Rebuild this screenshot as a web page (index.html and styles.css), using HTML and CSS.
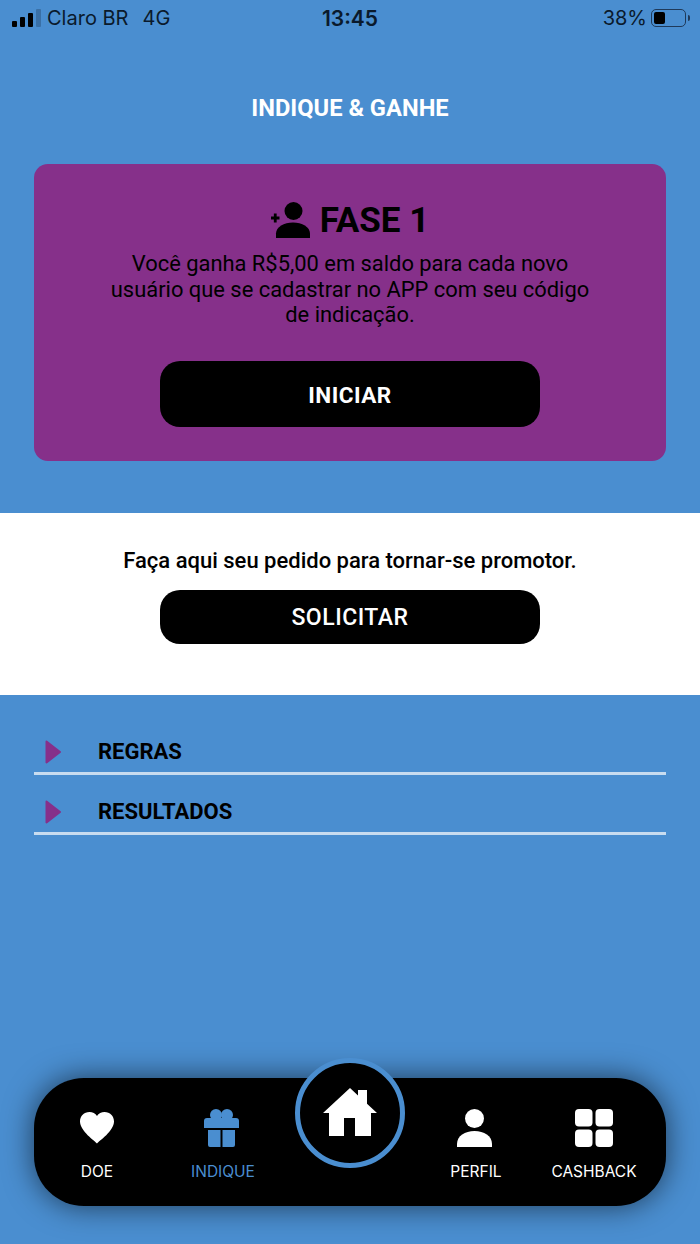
FILE: index.html
```html
<!DOCTYPE html>
<html lang="pt-BR">
    <head>
        <meta charset="UTF-8">
        <meta name="viewport" content="width=device-width, initial-scale=1.0">
        <title>Indique e Ganhe</title>
        <link rel="stylesheet" href="styles.css">
    </head>
    <body>
        <div id="app">
            <div class="statusbar">
                <div class="status-left">
                    <span class="signal"><i></i><i></i><i></i><i class="off"></i></span>
                    <span>Claro BR</span>
                    <span class="rede">4G</span>
                </div>
                <div class="status-time">13:45</div>
                <div class="status-right">
                    <span>38%</span>
                    <span class="battery"><i></i></span>
                    <span class="battery-tip"></span>
                </div>
            </div>

            <h1 class="titulo">INDIQUE &amp; GANHE</h1>

            <section class="card">
                <h2 class="fase">
                    <svg class="fase-icon" viewBox="0 0 39 36" width="39" height="36">
                        <circle cx="22.500" cy="9" r="9" fill="#000"/>
                        <path d="M5 36v-4.500C5 25 13 20.500 22 20.500S39 25 39 31.500V36z" fill="#000"/>
                        <path d="M0 16h8.500M4.250 11.500v9" stroke="#000" stroke-width="2.800" fill="none"/>
                    </svg>
                    FASE 1
                </h2>
                <p class="card-texto">Você ganha R$5,00 em saldo para cada novo usuário que se cadastrar no APP com seu código de indicação.</p>
                <button class="botao botao-iniciar">INICIAR</button>
            </section>

            <section class="promotor">
                <p>Faça aqui seu pedido para tornar-se promotor.</p>
                <button class="botao botao-solicitar">SOLICITAR</button>
            </section>

            <section class="lista">
                <div class="lista-item">
                    <svg viewBox="0 0 16 24" width="16" height="24"><path d="M1.500 1.500L15 12 1.500 22.500z" fill="#86308a" stroke="#86308a" stroke-width="2" stroke-linejoin="round"/></svg>
                    <span>REGRAS</span>
                </div>
                <div class="lista-item">
                    <svg viewBox="0 0 16 24" width="16" height="24"><path d="M1.500 1.500L15 12 1.500 22.500z" fill="#86308a" stroke="#86308a" stroke-width="2" stroke-linejoin="round"/></svg>
                    <span>RESULTADOS</span>
                </div>
            </section>

            <nav class="menu">
                <a class="menu-item item-doe">
                    <svg viewBox="0 -3 34 38" width="34" height="38"><path d="M17 31.500C15 29 0 19 0 9.500 0 4 4 0 9.500 0 12.500 0 15.500 1.500 17 4 18.500 1.500 21.500 0 24.500 0 30 0 34 4 34 9.500 34 19 19 29 17 31.500z" fill="#fff"/></svg>
                    <span>DOE</span>
                </a>
                <a class="menu-item item-indique ativo">
                    <svg viewBox="0 0 35 38" width="35" height="38" fill="#4a8ed0">
                        <circle cx="12" cy="6" r="6"/>
                        <circle cx="23" cy="6" r="6"/>
                        <path d="M3 9h29a3 3 0 0 1 3 3v7H0v-7a3 3 0 0 1 3-3z"/>
                        <path d="M4 21h12.500v17H6a2 2 0 0 1-2-2zM18.500 21H31v15a2 2 0 0 1-2 2H18.500z"/>
                    </svg>
                    <span>INDIQUE</span>
                </a>
                <div class="menu-espaco"></div>
                <a class="menu-item item-perfil">
                    <svg viewBox="0 0 35 38" width="35" height="38" fill="#fff">
                        <circle cx="17.500" cy="9.500" r="9.500"/>
                        <path d="M0 38v-3c0-8 8-13 17.500-13S35 27 35 35v3z"/>
                    </svg>
                    <span>PERFIL</span>
                </a>
                <a class="menu-item item-cashback">
                    <svg viewBox="0 0 38 38" width="38" height="38" fill="#fff">
                        <rect width="17.500" height="17.500" rx="4"/>
                        <rect x="20.500" width="17.500" height="17.500" rx="4"/>
                        <rect y="20.500" width="17.500" height="17.500" rx="4"/>
                        <rect x="20.500" y="20.500" width="17.500" height="17.500" rx="4"/>
                    </svg>
                    <span>CASHBACK</span>
                </a>
                <div class="home">
                    <svg viewBox="0 0 54 48" width="54" height="48"><path d="M27 0L35 7.400V2h9v13.700L54 25h-6v23H32V30H21v18H6V25H0z" fill="#fff"/></svg>
                </div>
            </nav>
        </div>
    </body>
</html>
```

FILE: styles.css
```css
html, body {
    margin: 0;
    padding: 0;
}

body {
    font-family: 'Roboto', sans-serif;
    background-color: #4a8ed0;
    color: #000;
}

#app {
    position: relative;
    width: 700px;
    height: 1244px;
    overflow: hidden;
}

.statusbar {
    height: 36px;
    display: flex;
    align-items: center;
    justify-content: space-between;
    position: relative;
    padding: 0 10px 0 12px;
    font-family: 'Inter', sans-serif;
    font-size: 20px;
    color: #0a1a2c;
}

.status-left,
.status-right {
    display: flex;
    align-items: center;
}

.signal {
    display: flex;
    align-items: flex-end;
    gap: 3px;
    height: 18px;
    margin-right: 6px;
}

.signal i {
    width: 5px;
    background-color: #000;
    border-radius: 1px;
}

.signal i:nth-child(1) { height: 6px; }
.signal i:nth-child(2) { height: 10px; }
.signal i:nth-child(3) { height: 14px; }
.signal i:nth-child(4) { height: 18px; }

.signal i.off {
    background-color: #3a70a6;
}

.rede {
    margin-left: 14px;
}

.status-time {
    position: absolute;
    left: 0;
    right: 0;
    text-align: center;
    font-size: 21px;
    font-weight: 600;
    pointer-events: none;
}

.battery {
    width: 35px;
    height: 18px;
    box-sizing: border-box;
    border: 1.500px solid #1f3a5a;
    border-radius: 5px;
    padding: 2px;
    margin-left: 4px;
    display: flex;
}

.battery i {
    width: 11px;
    background-color: #000;
    border-radius: 2px;
}

.battery-tip {
    width: 2px;
    height: 6px;
    margin-left: 2px;
    background-color: #1f3a5a;
    border-radius: 0 2px 2px 0;
}

.titulo {
    margin: 59px 0 0;
    height: 27px;
    line-height: 27px;
    text-align: center;
    font-size: 23.700px;
    font-weight: 700;
    color: #fff;
}

.card {
    margin: 42px 34px 0;
    height: 297px;
    box-sizing: border-box;
    padding-top: 34px;
    background-color: #86308a;
    border-radius: 14px;
    display: flex;
    flex-direction: column;
    align-items: center;
}

.fase {
    margin: 0;
    display: flex;
    align-items: center;
    gap: 10px;
    height: 44px;
    font-size: 35px;
    font-weight: 700;
}

.card-texto {
    margin: 9px 0 0;
    width: 490px;
    text-align: center;
    font-size: 21.900px;
    line-height: 25.500px;
}

.botao {
    display: block;
    width: 380px;
    border: none;
    border-radius: 20px;
    background-color: #000;
    color: #fff;
    font-family: 'Roboto', sans-serif;
    font-weight: 500;
    letter-spacing: 0.5px;
}

.botao-iniciar {
    height: 66px;
    margin-top: 33px;
    padding-top: 3px;
    font-size: 22.500px;
    font-weight: 700;
}

.promotor {
    margin-top: 52px;
    height: 182px;
    box-sizing: border-box;
    padding-top: 35px;
    background-color: #fff;
    display: flex;
    flex-direction: column;
    align-items: center;
}

.promotor p {
    margin: 0;
    height: 26px;
    line-height: 26px;
    font-size: 22px;
    font-weight: 500;
}

.botao-solicitar {
    height: 54px;
    margin-top: 16px;
    font-size: 23px;
}

.lista {
    margin: 36px 34px 0;
    display: flex;
    flex-direction: column;
    gap: 16px;
}

.lista-item {
    height: 41px;
    display: flex;
    align-items: center;
    padding-left: 11px;
    border-bottom: 3px solid #c8dcf0;
    font-size: 22px;
    font-weight: 700;
}

.lista-item span {
    margin-left: 37px;
}

.menu {
    position: absolute;
    left: 34px;
    top: 1078px;
    width: 632px;
    height: 128px;
    box-sizing: border-box;
    background-color: #000;
    border-radius: 50px;
    box-shadow: 0 0 30px rgba(0, 0, 0, 0.6);
    display: flex;
}

.menu-item {
    display: flex;
    flex-direction: column;
    align-items: center;
    padding-top: 31px;
    font-family: 'Inter', sans-serif;
    font-size: 15.500px;
    color: #fff;
}

.menu-item svg {
    margin-bottom: 15px;
}

.item-indique svg,
.item-perfil svg {
    margin-right: 3px;
}

.menu-item span {
    line-height: 20px;
}

.item-doe { width: 126px; }
.item-indique { width: 126px; }
.menu-espaco { width: 126px; }
.item-perfil { width: 128px; }
.item-cashback { width: 108px; }

.menu-item.ativo {
    color: #4a8ed0;
}

.home {
    position: absolute;
    left: 261px;
    top: -20px;
    width: 110px;
    height: 110px;
    box-sizing: border-box;
    border: 5px solid #4a8ed0;
    border-radius: 50%;
    background-color: #000;
    display: flex;
    justify-content: center;
    padding-top: 25px;
}
```
